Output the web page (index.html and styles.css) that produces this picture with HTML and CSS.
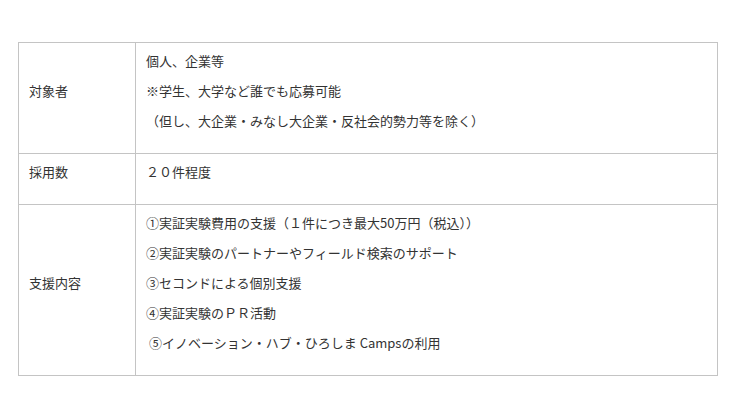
FILE: index.html
```html
<!DOCTYPE html>
<html lang="ja">
<head>
<meta charset="utf-8">
<link rel="stylesheet" href="styles.css">
</head>
<body>
<table class="info">
  <tr>
    <th class="label">対象者</th>
    <td class="body">
      <p>個人、企業等</p>
      <p>※学生、大学など誰でも応募可能</p>
      <p>（但し、大企業・みなし大企業・反社会的勢力等を除く）</p>
    </td>
  </tr>
  <tr>
    <th class="label">採用数</th>
    <td class="body">
      <p>２０件程度</p>
    </td>
  </tr>
  <tr>
    <th class="label">支援内容</th>
    <td class="body">
      <p>①実証実験費用の支援（１件につき最大50万円（税込））</p>
      <p>②実証実験のパートナーやフィールド検索のサポート</p>
      <p>③セコンドによる個別支援</p>
      <p>④実証実験のＰＲ活動</p>
      <p class="indent">⑤イノベーション・ハブ・ひろしま Campsの利用</p>
    </td>
  </tr>
</table>
</body>
</html>
```

FILE: styles.css
```css
html, body {
  margin: 0;
  padding: 0;
  background: #ffffff;
}
body {
  padding: 42px 22px 0 18px;
  font-family: "Noto Sans CJK JP", "Noto Sans", sans-serif;
  font-size: 13px;
  color: #333333;
}
.info {
  width: 700px;
  border-collapse: collapse;
}
.info th,
.info td {
  border: 1px solid #c4c4c4;
  padding: 8px 10px 12px 10px;
  text-align: left;
  font-weight: normal;
  vertical-align: middle;
  line-height: 20px;
}
.info th.label {
  width: 96px;
  padding-bottom: 22px;
}
.body p {
  margin: 0 0 10px 0;
  line-height: 20px;
}
.indent {
  padding-left: 3px;
}
```
